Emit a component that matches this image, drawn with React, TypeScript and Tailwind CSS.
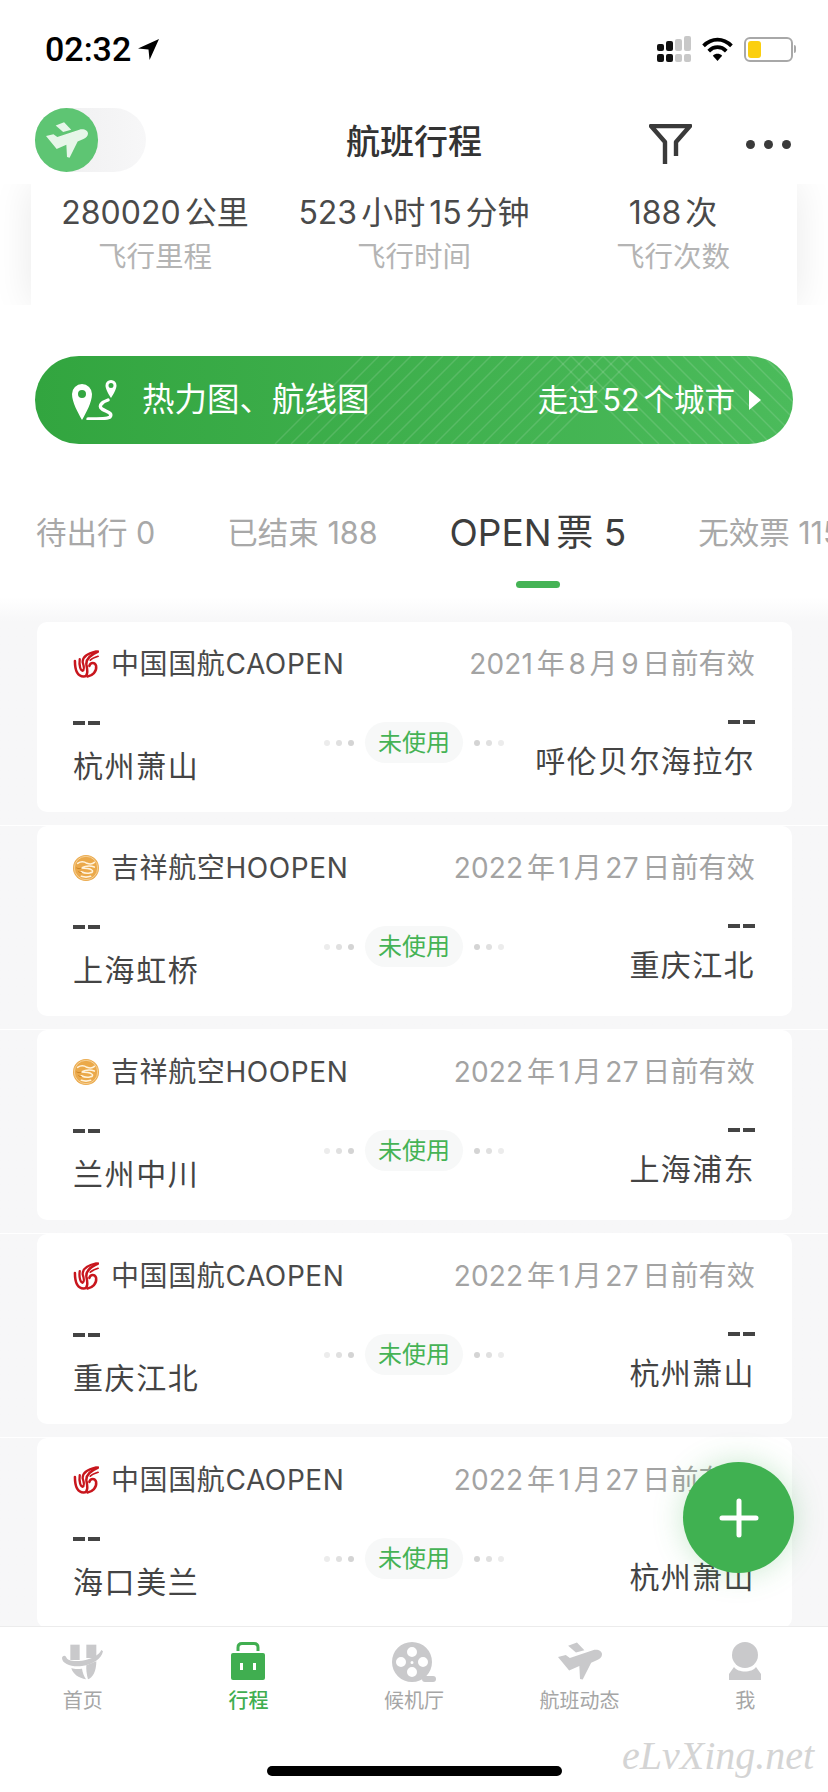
import { Fragment } from 'react'

const tickets = [
  { airline: 'ca', name: '中国国航CAOPEN', date: '2021年8月9日前有效', from: '杭州萧山', to: '呼伦贝尔海拉尔' },
  { airline: 'ho', name: '吉祥航空HOOPEN', date: '2022年1月27日前有效', from: '上海虹桥', to: '重庆江北' },
  { airline: 'ho', name: '吉祥航空HOOPEN', date: '2022年1月27日前有效', from: '兰州中川', to: '上海浦东' },
  { airline: 'ca', name: '中国国航CAOPEN', date: '2022年1月27日前有效', from: '重庆江北', to: '杭州萧山' },
  { airline: 'ca', name: '中国国航CAOPEN', date: '2022年1月27日前有效', from: '海口美兰', to: '杭州萧山' },
]

const stats = [
  { value: '280020公里', label: '飞行里程', w: 'w-[248px]' },
  { value: '523小时15分钟', label: '飞行时间', w: 'w-[270px]' },
  { value: '188次', label: '飞行次数', w: 'w-[248px]' },
]

const tabs = [
  { label: '待出行 0' },
  { label: '已结束 188' },
  { label: 'OPEN票 5', active: true },
  { label: '无效票 115' },
]

function PlaneGlyph({ className, color }: { className: string; color: string }) {
  return (
    <svg viewBox="0 0 130 110" className={className} fill={color}>
      <path d="M30 10L56 0L78 23L53 30Z" />
      <path d="M0 43L23 37L35 46L103 23C118 19 130 26 130 35C130 43 124 49 116 52L98 60L73 110L65 108L63 70L33 83Z" />
    </svg>
  )
}

function AirChinaLogo() {
  return (
    <svg viewBox="0 0 27 28" className="w-[26px] h-[28px]" fill="none" stroke="#c8161d" strokeLinecap="round">
      <path d="M2 11C2 22 5 27 11 27C16 27 15 20 14 15C13 9 17 5 26 1" strokeWidth="2.6" />
      <path d="M7 9C6 16 8 21 10 21C12 20 11 15 10 12C10 7 15 3 24 1" strokeWidth="2.4" />
      <path d="M15 27C20 26 25 22 24 16C23 12 18 12 17 16" strokeWidth="2.6" />
      <path d="M18 10C20 8 23 7 26 6" strokeWidth="1.8" />
    </svg>
  )
}

function JuneyaoLogo() {
  return (
    <svg viewBox="0 0 28 28" className="w-[28px] h-[28px]">
      <circle cx="14" cy="14" r="14" fill="#eba94a" />
      <circle cx="14" cy="14" r="12.6" fill="none" stroke="#fbe6c3" strokeWidth="0.7" />
      <path d="M5 9c3-2 7-2 10 0 3 1 6 1 8-1M23 13c-5-2-10-1-14 1 4 0 8 0 11 2 2 1 1 3-1 3-3 1-6 1-10-1M9 23c3 1 7 1 10 0" fill="none" stroke="#fff3dc" strokeWidth="1.7" strokeLinecap="round" />
      <path d="M4 14c2 1 3 1 5 0M6 18c1 1 2 1 3 1" fill="none" stroke="#c97f22" strokeWidth="1" strokeLinecap="round" />
    </svg>
  )
}

function Dots({ reverse }: { reverse?: boolean }) {
  const tones = reverse
    ? ['bg-[#d4d4d4]', 'bg-[#e0e0e0]', 'bg-[#ececec]']
    : ['bg-[#ececec]', 'bg-[#e0e0e0]', 'bg-[#d4d4d4]']
  return (
    <div className="flex gap-[6px]">
      {tones.map((tone, i) => (
        <span key={i} className={`w-[6px] h-[6px] rounded-full ${tone}`} />
      ))}
    </div>
  )
}

function Dashes() {
  return (
    <div className="flex gap-[3px]">
      <span className="w-[12px] h-[4px] bg-[#444444]" />
      <span className="w-[12px] h-[4px] bg-[#444444]" />
    </div>
  )
}

function TicketRow({ t }: { t: (typeof tickets)[number] }) {
  return (
    <div className="h-[204px] shrink-0 pl-[37px] pr-[36px] border-b border-white">
      <div className="h-[190px] bg-white rounded-[10px] pl-[36px] pr-[37px] pt-[24px]">
        <div className="flex items-center justify-between h-[36px]">
          <div className="flex items-center gap-[12px]">
            <div className="w-[26px] flex justify-center">
              {t.airline === 'ca' ? <AirChinaLogo /> : <JuneyaoLogo />}
            </div>
            <span className="text-[28px] leading-[36px] text-[#4a4a4a] tracking-[0.6px] [text-autospace:no-autospace]">{t.name}</span>
          </div>
          <span className="text-[28px] leading-[36px] text-[#a3a3a3] tracking-[0.2px]">{t.date}</span>
        </div>
        <div className="grid grid-cols-[1fr_auto_1fr] items-start mt-[31px]">
          <div>
            <div className="pt-[8px] pb-[19px]"><Dashes /></div>
            <div className="text-[30px] leading-[44px] text-[#444444] tracking-[1.6px]">{t.from}</div>
          </div>
          <div className="flex items-center gap-[11px] mt-[9px]">
            <Dots />
            <span className="w-[98px] h-[41px] rounded-full bg-[#f7f8f8] flex items-center justify-center text-[24px] text-[#45b355]">
              未使用
            </span>
            <Dots reverse />
          </div>
          <div className="flex flex-col items-end">
            <div className="pt-[7px] pb-[15px]"><Dashes /></div>
            <div className="text-[30px] leading-[44px] text-[#444444] tracking-[1.4px] whitespace-nowrap">{t.to}</div>
          </div>
        </div>
      </div>
    </div>
  )
}

function StatusBar() {
  return (
    <div className="h-[100px] flex items-start justify-between pl-[45px] pr-[32px] pt-[29px]">
      <div className="flex items-center gap-[7px] text-black text-[34px] leading-[40px] font-medium font-['Roboto',sans-serif]">
        02:32
        <svg viewBox="0 0 20 20" className="w-[21px] h-[21px]" fill="#000">
          <path d="M20 0L0 9l10 1 1 10z" />
        </svg>
      </div>
      <div className="flex items-center gap-[11px] h-[40px]">
        <svg viewBox="0 0 34 26" className="w-[34px] h-[26px]">
          <rect x="0" y="8" width="7" height="7" rx="2" fill="#111" />
          <rect x="0" y="18" width="7" height="8" rx="2" fill="#111" />
          <rect x="9" y="5" width="7" height="10" rx="2" fill="#111" />
          <rect x="9" y="18" width="7" height="8" rx="2" fill="#111" />
          <rect x="18" y="3" width="7" height="12" rx="2" fill="#c8c8c8" />
          <rect x="18" y="18" width="7" height="8" rx="2" fill="#c8c8c8" />
          <rect x="27" y="0" width="7" height="15" rx="2" fill="#c8c8c8" />
          <rect x="27" y="18" width="7" height="8" rx="2" fill="#c8c8c8" />
        </svg>
        <svg viewBox="0 0 30 23" className="w-[31px] h-[24px]" fill="none" stroke="#000" strokeWidth="3.6">
          <path d="M1.5 8.5c8-8 19-8 27 0" />
          <path d="M6.5 13.5c5-5 12-5 17 0" />
          <path d="M15 23l-4.500-5c2.500-2.500 6.500-2.500 9 0z" fill="#000" stroke="none" />
        </svg>
        <div className="flex items-center">
          <div className="w-[49px] h-[25px] rounded-[6px] border-2 border-[#a8a8a8] p-[2px]">
            <div className="w-[13px] h-full rounded-[3px] bg-[#fbcf0f]" />
          </div>
          <span className="w-[2px] h-[8px] bg-[#a8a8a8] ml-[1px] rounded-r-full" />
        </div>
      </div>
    </div>
  )
}

function NavBar() {
  return (
    <div className="h-[84px] relative flex items-start justify-between pl-[35px] pr-[37px] pt-[8px]">
      <div className="w-[111px] h-[64px] rounded-full bg-gradient-to-r from-[#eeeeef] to-[#f7f7f8]">
        <div className="w-[63px] h-[64px] rounded-full bg-[#5ec573] flex items-center justify-center">
          <PlaneGlyph className="w-[42px] h-[36px]" color="#e6f6e9" />
        </div>
      </div>
      <h1 className="absolute left-0 right-0 top-[20px] text-center text-[34px] leading-[44px] font-medium text-[#333333]">
        航班行程
      </h1>
      <div className="flex items-center gap-[54px] h-[64px] pt-[8px]">
        <svg viewBox="0 0 43 40" className="w-[43px] h-[40px]" fill="none" stroke="#3a3a3a" strokeWidth="4.4" strokeLinejoin="round">
          <path d="M16 40V18L2 2H41L27 18V32" />
        </svg>
        <div className="flex gap-[9px] mt-[1px]">
          <span className="w-[9px] h-[9px] rounded-full bg-[#3a3a3a]" />
          <span className="w-[9px] h-[9px] rounded-full bg-[#3a3a3a]" />
          <span className="w-[9px] h-[9px] rounded-full bg-[#3a3a3a]" />
        </div>
      </div>
    </div>
  )
}

function Banner() {
  return (
    <div className="relative ml-[35px] mr-[35px] h-[88px] rounded-full overflow-hidden bg-gradient-to-r from-[#32a53f] to-[#4bbb5b] flex items-center justify-between pl-[37px] pr-[32px] text-white">
      <svg viewBox="0 0 758 88" className="absolute inset-0 w-full h-full" fill="none" stroke="#ffffff" strokeOpacity="0.13" strokeWidth="1.5">
        {[0, 1, 2, 3, 4, 5, 6, 7, 8, 9, 10, 11, 12, 13, 14, 15, 16, 17].map((i) => (
          <Fragment key={i}>
            <path d={`M${240 + i * 16} 88L${328 + i * 16} 0`} />
            <path d={`M${520 + i * 16} 0L${608 + i * 16} 88`} />
          </Fragment>
        ))}
      </svg>
      <div className="relative flex items-center gap-[25px]">
        <svg viewBox="0 0 45 40" className="w-[45px] h-[40px]" fill="#ffffff" fillRule="evenodd">
          <path d="M10 4a10 10 0 0 1 10 10C20 22 14 33 10 40C6 33 0 22 0 14A10 10 0 0 1 10 4zM10 10a4 4 0 1 0 0 8a4 4 0 0 0 0-8z" />
          <path d="M39 0a5.500 5.500 0 0 1 5.500 5.500C44.500 9 41 15 39 18C37 15 33.500 9 33.500 5.500A5.500 5.500 0 0 1 39 0zM39 3a2.500 2.500 0 1 0 0 5a2.500 2.500 0 0 0 0-5z" />
          <path d="M36 20C30 22 26 26 30 29C35 32 41 33 38 37C36 39 25 39 16 39" fill="none" stroke="#ffffff" strokeWidth="3.4" strokeLinecap="round" />
        </svg>
        <span className="text-[32.5px] leading-[44px]">热力图、航线图</span>
      </div>
      <div className="relative flex items-center gap-[14px]">
        <span className="text-[30.5px] leading-[44px]">走过52个城市</span>
        <span className="w-0 h-0 border-y-[10px] border-y-transparent border-l-[12px] border-l-white" />
      </div>
    </div>
  )
}

function Tabs() {
  return (
    <div className="h-[153px] flex items-start gap-[72px] pl-[36px] pt-[67px] overflow-hidden whitespace-nowrap">
      {tabs.map((tab) => (
        <div key={tab.label} className="shrink-0 flex flex-col items-center">
          <span className={tab.active ? 'text-[37px] leading-[44px] text-[#3d3d3d]' : 'text-[30.5px] leading-[44px] text-[#a8a8a8]'}>
            {tab.label}
          </span>
          {tab.active && <span className="mt-[26px] w-[44px] h-[7px] rounded-full bg-[#45b355]" />}
        </div>
      ))}
    </div>
  )
}

function BottomNav() {
  const gray = '#c9c9cb'
  return (
    <div className="relative z-10 h-[166px] shrink-0 bg-white border-t border-[#ececec] pt-[15px]">
      <div className="grid grid-cols-5 justify-items-center">
        <div className="flex flex-col items-center">
          <svg viewBox="0 0 123 104" className="w-[41px] h-[36px] mt-[2px]" fill={gray}>
            <rect x="25" y="0" width="28" height="46" />
            <rect x="73" y="0" width="30" height="40" />
            <path d="M0 40C0 34 8 30 12 36C16 48 30 50 60 48C90 44 112 30 118 16L123 20C118 42 95 60 60 64C30 68 0 58 0 40Z" />
            <path d="M28 70C40 75 55 72 60 72C62 85 66 95 72 104C50 100 32 88 28 70Z" />
            <path d="M73 62L103 50C103 80 92 100 78 104C74 90 72 75 73 62Z" />
          </svg>
          <span className="mt-[7px] text-[20px] leading-[28px] text-[#a6a6a6]">首页</span>
        </div>
        <div className="flex flex-col items-center">
          <svg viewBox="0 0 34 38" className="w-[34px] h-[38px]">
            <path d="M7 9V5.500Q7 1.500 11 1.500H23Q27 1.500 27 5.500V9" fill="none" stroke="#40ae50" strokeWidth="3" />
            <rect x="0" y="11" width="34" height="27" rx="2" fill="#40ae50" />
            <rect x="9" y="21" width="3" height="7" fill="#fff" />
            <rect x="22" y="21" width="3" height="7" fill="#fff" />
          </svg>
          <span className="mt-[7px] text-[20px] leading-[28px] font-medium text-[#40ae50]">行程</span>
        </div>
        <div className="flex flex-col items-center">
          <svg viewBox="0 0 44 40" className="w-[44px] h-[40px]" fill={gray} fillRule="evenodd">
            <path d="M20 0a20 20 0 1 1 0 40a20 20 0 0 1 0-40zM20 5a5 5 0 1 0 0 10a5 5 0 0 0 0-10zM9 15a5 5 0 1 0 0 10a5 5 0 0 0 0-10zM31 15a5 5 0 1 0 0 10a5 5 0 0 0 0-10zM20 25a5 5 0 1 0 0 10a5 5 0 0 0 0-10zM20 19a1.500 1.500 0 1 0 0 3a1.500 1.500 0 0 0 0-3z" />
            <rect x="30" y="34" width="14" height="6" rx="3" />
          </svg>
          <span className="mt-[5px] text-[20px] leading-[28px] text-[#a6a6a6]">候机厅</span>
        </div>
        <div className="flex flex-col items-center">
          <PlaneGlyph className="w-[44px] h-[38px]" color={gray} />
          <span className="mt-[7px] text-[20px] leading-[28px] text-[#a6a6a6]">航班动态</span>
        </div>
        <div className="flex flex-col items-center">
          <svg viewBox="0 0 32 38" className="w-[32px] h-[38px]" fill={gray}>
            <circle cx="16" cy="13" r="13" />
            <path d="M5 25C9 31 23 31 27 25L32 32V38H0V32Z" />
          </svg>
          <span className="mt-[7px] text-[20px] leading-[28px] text-[#a6a6a6]">我</span>
        </div>
      </div>
    </div>
  )
}

export default function App() {
  return (
    <div className="relative w-[828px] h-[1792px] overflow-hidden flex flex-col bg-white font-['Inter','Noto_Sans_CJK_SC',sans-serif] [text-autospace:normal]">
      <header className="relative z-10 h-[184px] shrink-0 bg-white">
        <StatusBar />
        <NavBar />
      </header>

      <main className="flex-1 min-h-0 overflow-hidden flex flex-col">
        {/* Summary card, scrolled partly under the header */}
        <section className="h-[121px] shrink-0 mx-[31px] flex bg-white shadow-[0_0_40px_rgba(0,0,0,0.09)] pt-[8px] [clip-path:inset(0_-40px_0_-40px)]">
          {stats.map((s) => (
            <div key={s.label} className={`${s.w} flex flex-col items-center`}>
              <span className="text-[32px] leading-[42px] text-[#4a4a4a] whitespace-nowrap">{s.value}</span>
              <span className="mt-[2px] text-[28.5px] leading-[42px] text-[#b4b4b4]">{s.label}</span>
            </div>
          ))}
        </section>

        <div className="h-[51px] shrink-0" />
        <Banner />
        <Tabs />

        <div className="flex-1 min-h-0 pt-[25px] flex flex-col bg-gradient-to-b from-white to-[#f7f7f8] to-[25px]">
          {tickets.map((t, i) => (
            <TicketRow key={i} t={t} />
          ))}
        </div>
      </main>

      <BottomNav />

      {/* Floating add button */}
      <button className="absolute z-20 right-[34px] bottom-[219px] w-[111px] h-[111px] rounded-full bg-[#40b151] flex items-center justify-center shadow-[0_0_30px_rgba(64,177,81,0.28)]">
        <svg viewBox="0 0 40 40" className="w-[40px] h-[40px]" fill="none" stroke="#ffffff" strokeWidth="5" strokeLinecap="round">
          <path d="M20 3v34M3 20h34" />
        </svg>
      </button>

      <span className="absolute z-20 left-[267px] bottom-[16px] w-[295px] h-[10px] rounded-full bg-black" />
      <span className="absolute z-20 left-[622px] bottom-[14px] text-[40px] leading-[44px] italic text-[#d4d4d4] font-['Liberation_Serif',serif]">
        eLvXing.net
      </span>
    </div>
  )
}
